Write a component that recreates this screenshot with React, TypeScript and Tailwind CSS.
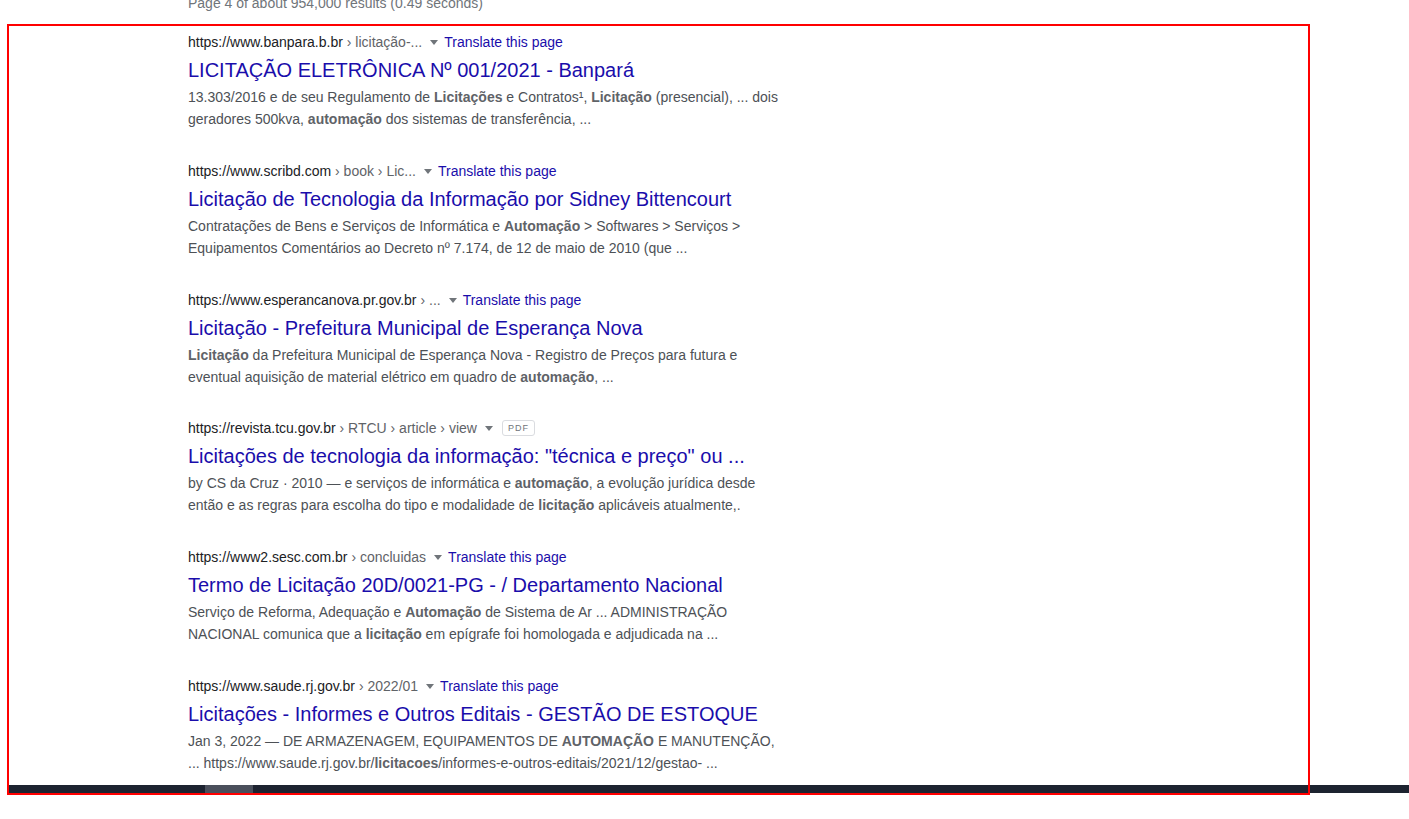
const results = [
  {
    host: "https://www.banpara.b.br",
    path: " › licitação-...",
    badge: "translate",
    title: "LICITAÇÃO ELETRÔNICA Nº 001/2021 - Banpará",
    lines: [
      [
        "13.303/2016 e de seu Regulamento de ",
        { b: "Licitações" },
        " e Contratos¹, ",
        { b: "Licitação" },
        " (presencial), ... dois",
      ],
      ["geradores 500kva, ", { b: "automação" }, " dos sistemas de transferência, ..."],
    ],
  },
  {
    host: "https://www.scribd.com",
    path: " › book › Lic...",
    badge: "translate",
    title: "Licitação de Tecnologia da Informação por Sidney Bittencourt",
    lines: [
      [
        "Contratações de Bens e Serviços de Informática e ",
        { b: "Automação" },
        " > Softwares > Serviços >",
      ],
      ["Equipamentos Comentários ao Decreto nº 7.174, de 12 de maio de 2010 (que ..."],
    ],
  },
  {
    host: "https://www.esperancanova.pr.gov.br",
    path: " › ...",
    badge: "translate",
    title: "Licitação - Prefeitura Municipal de Esperança Nova",
    lines: [
      [
        { b: "Licitação" },
        " da Prefeitura Municipal de Esperança Nova - Registro de Preços para futura e",
      ],
      ["eventual aquisição de material elétrico em quadro de ", { b: "automação" }, ", ..."],
    ],
  },
  {
    host: "https://revista.tcu.gov.br",
    path: " › RTCU › article › view",
    badge: "pdf",
    title: "Licitações de tecnologia da informação: \"técnica e preço\" ou ...",
    lines: [
      [
        "by CS da Cruz · 2010 — e serviços de informática e ",
        { b: "automação" },
        ", a evolução jurídica desde",
      ],
      [
        "então e as regras para escolha do tipo e modalidade de ",
        { b: "licitação" },
        " aplicáveis atualmente,.",
      ],
    ],
  },
  {
    host: "https://www2.sesc.com.br",
    path: " › concluidas",
    badge: "translate",
    title: "Termo de Licitação 20D/0021-PG - / Departamento Nacional",
    lines: [
      [
        "Serviço de Reforma, Adequação e ",
        { b: "Automação" },
        " de Sistema de Ar ... ADMINISTRAÇÃO",
      ],
      ["NACIONAL comunica que a ", { b: "licitação" }, " em epígrafe foi homologada e adjudicada na ..."],
    ],
  },
  {
    host: "https://www.saude.rj.gov.br",
    path: " › 2022/01",
    badge: "translate",
    title: "Licitações - Informes e Outros Editais - GESTÃO DE ESTOQUE",
    lines: [
      [
        "Jan 3, 2022 — DE ARMAZENAGEM, EQUIPAMENTOS DE ",
        { b: "AUTOMAÇÃO" },
        " E MANUTENÇÃO,",
      ],
      [
        "... https://www.saude.rj.gov.br/",
        { b: "licitacoes" },
        "/informes-e-outros-editais/2021/12/gestao- ...",
      ],
    ],
  },
];

type Piece = string | { b: string };
type Result = (typeof results)[number];

const SnippetLine = ({ pieces }: { pieces: Piece[] }) => (
  <div className="whitespace-pre">
    {pieces.map((p, i) =>
      typeof p === "string" ? (
        <span key={i}>{p}</span>
      ) : (
        <b key={i} className="font-bold text-[#5f6368]">
          {p.b}
        </b>
      )
    )}
  </div>
);

const ResultItem = ({ r, tight }: { r: Result; tight?: boolean }) => (
  <div className={tight ? "mb-[29px]" : "mb-[30px]"}>
    <div className="flex h-[22px] items-center text-[14px] leading-[22px]">
      <span className="text-[#202124]">{r.host}</span>
      <span className="whitespace-pre text-[#5f6368]">{r.path}</span>
      <span className="ml-[8px] mt-[1px] inline-block h-0 w-0 border-x-[4px] border-t-[5px] border-x-transparent border-t-[#70757a]" />
      {r.badge === "translate" ? (
        <span className="ml-[6px] text-[#1a0dab]">Translate this page</span>
      ) : (
        <span className="ml-[9px] flex h-[16px] items-center rounded-[3px] border border-[#dadce0] px-[5px] text-[9px] leading-none tracking-[1px] text-[#70757a]">
          PDF
        </span>
      )}
    </div>
    <h3 className="mt-[4px] text-[20px] leading-[26px] text-[#1a0dab]">{r.title}</h3>
    <div className="mt-[3px] text-[14px] leading-[22px] text-[#4d5156]">
      {r.lines.map((l, i) => (
        <SnippetLine key={i} pieces={l as Piece[]} />
      ))}
    </div>
  </div>
);

export default function App() {
  return (
    <div className="relative h-[819px] w-full overflow-hidden bg-white font-['Liberation_Sans',Arial,sans-serif]">
      <div className="h-[785px] overflow-hidden pl-[188px]">
        <div className="-mt-[8px] text-[14px] leading-[22px] text-[#70757a]">
          Page 4 of about 954,000 results (0.49 seconds)
        </div>
        <div className="pt-[17px]">
          {results.map((r, i) => (
            <ResultItem key={i} r={r} tight={i === 2} />
          ))}
        </div>
      </div>
      <div className="ml-[7px] flex h-[8px] bg-[#1d2330]">
        <div className="ml-[198px] h-full w-[48px] bg-[#4a4f5b]" />
      </div>
      <div className="pointer-events-none absolute left-[7px] top-[24px] h-[771px] w-[1303px] border-2 border-[#ff0000]" />
    </div>
  );
}
